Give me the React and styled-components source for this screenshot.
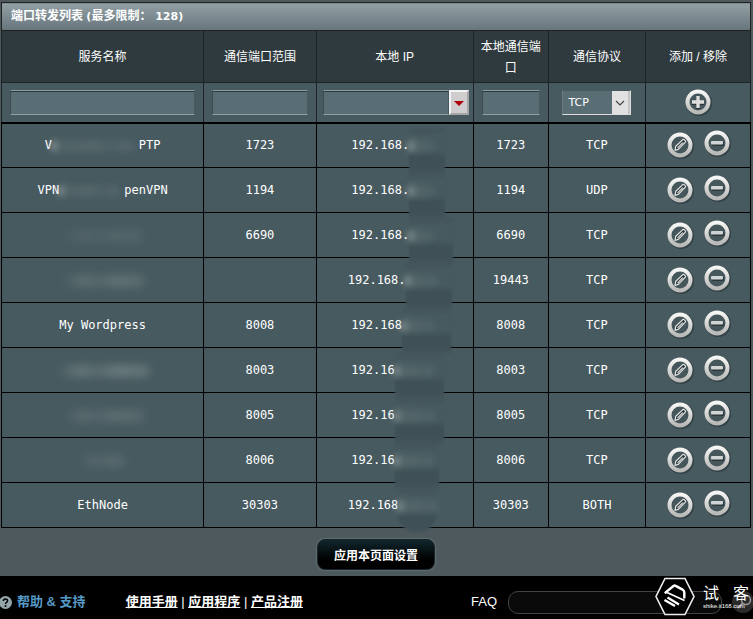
import React, { useState } from "react";
import styled, { createGlobalStyle } from "styled-components";

const GlobalStyle = createGlobalStyle`
  * {
    box-sizing: border-box;
  }
  body {
    margin: 0;
    background-color: #4d595d;
    color: #fff;
    font-family: "Liberation Sans", "Noto Sans CJK SC", sans-serif;
    font-size: 12px;
  }
`;

const Page = styled.div`
  min-height: 100vh;
  display: flex;
  flex-direction: column;
  overflow: hidden;
  position: relative;
`;
const Main = styled.main`
  padding: 2px 2px 6px 1px;
`;
const Table = styled.table`
  width: 100%;
  table-layout: fixed;
  border-collapse: collapse;
  background-color: #475a5f;
`;
const Col = styled.col`
  width: ${(props) => props.$width};
`;
const Title = styled.th`
  height: 28px;
  padding: 0 9px;
  border: 1px solid #222;
  background: linear-gradient(#92a0a5, #66757c);
  text-align: left;
  line-height: 18px;
`;
const Limit = styled.span`
  font-family: "DejaVu Sans", "Noto Sans CJK SC", sans-serif;
  font-size: 11px;
`;
const HeadCell = styled.th`
  height: 52px;
  padding: 2px 5px 0;
  border: 1px solid #1c2427;
  background-color: #2f3a3e;
  font-weight: 400;
  line-height: 21px;
`;
const FormCell = styled.td`
  height: 40px;
  padding: 0 8px;
  border: 1px solid #1c2427;
  text-align: center;
`;
const Cell = styled.td`
  height: 45px;
  padding: 0;
  border: 1px solid #000;
  font-family: "DejaVu Sans Mono", monospace;
  line-height: 16px;
  text-align: center;
`;
const Body = styled.tbody`
  border-top: 2px solid #000;
`;

const Input = styled.input`
  display: block;
  width: 100%;
  min-width: 0;
  height: 25px;
  padding: 0 5px;
  border: 1px solid;
  border-color: #8f9ca0 #475a5f #929ea1 #3c4a4f;
  background-color: #596d74;
  box-shadow: inset 0 1px 0 #2b373b;
  color: #fff;
  font-size: 12px;
`;
const Combo = styled.div`
  display: flex;
  margin: 0 -4px 0 -2px;
`;
const ComboButton = styled.button`
  flex: none;
  width: 20px;
  height: 25px;
  padding: 0;
  border: 2px solid;
  border-color: #f4f4f4 #a5a5a5 #a5a5a5 #f4f4f4;
  background-color: #cfcdcd;
`;
const SelectBox = styled.div`
  display: inline-block;
  position: relative;
  vertical-align: middle;
`;
const Select = styled.select`
  appearance: none;
  display: block;
  width: 69px;
  height: 25px;
  padding: 0 20px 0 5px;
  border: 1px solid;
  border-color: #475a5f #dcdcdc #dcdcdc #6c7c81;
  border-radius: 0;
  background-color: #596d74;
  color: #fff;
  font-family: "DejaVu Sans", sans-serif;
  font-size: 11px;
`;
const Chevron = styled.span`
  position: absolute;
  top: 1px;
  right: 1px;
  width: 18px;
  height: 23px;
  background-color: #e1e1e1;
  border-right: 2px solid #c4c4c4;
  pointer-events: none;
`;

const Actions = styled.div`
  display: flex;
  justify-content: center;
  gap: 9px;
`;
const IconButton = styled.button`
  width: 28px;
  height: 30px;
  padding: 0;
  border: 0;
  background: none;
  cursor: pointer;

  svg {
    display: block;
  }
`;

/* private part of a name or address, smeared out */
const Hidden = styled.span`
  display: inline-block;
  position: relative;
  width: ${(props) => props.$chars}ch;
  height: 12px;
  vertical-align: middle;

  &::after {
    content: "";
    position: absolute;
    inset: 0 4px 0 -2px;
    border-radius: 6px;
    background: linear-gradient(
      90deg,
      #d5dddd88 0,
      #8c999c22 10px,
      #8c999c33 50%,
      #7b8a8e22 70%,
      #8c999c33
    );
    filter: blur(3px);
  }
`;
const HiddenIp = styled(Hidden)`
  &::before {
    content: "";
    position: absolute;
    top: -12px;
    left: 0;
    width: ${(props) => props.$width}px;
    height: 45px;
    background: linear-gradient(#43555b 0, #475a5f 8px, #475a5f 22px, #3f5056 30px, #3f5056 38px, #43555b);
    filter: blur(1px);
    border-radius: ${(props) => (props.$last ? "0 0 20px 20px" : 0)};
  }
`;
const Blur = styled.span`
  display: inline-block;
  width: ${(props) => props.$width}px;
  height: 12px;
  vertical-align: middle;
  background: linear-gradient(90deg, #9aa6a800, #9aa6a877 25%, #9aa6a844 45%, #9aa6a888 65%, #9aa6a866);
  filter: blur(4px);
  opacity: ${(props) => props.$strength};
`;

const ApplyButton = styled.button`
  display: block;
  margin: 11px auto 0;
  height: 31px;
  padding: 0 16px;
  border: 1px solid #16262b;
  border-radius: 8px;
  background: linear-gradient(#10262d, #000 70%);
  box-shadow: 0 0 2px #8a979b;
  color: #fff;
  font-family: inherit;
  font-size: 12px;
  font-weight: 700;
`;

const Footer = styled.footer`
  flex: 1;
  min-height: 43px;
  padding-top: 9px;
  background-color: #000;
  font-size: 13px;
  line-height: 20px;
`;
const FooterRow = styled.div`
  display: flex;
  align-items: center;
  height: 34px;
`;
const Help = styled.div`
  display: flex;
  align-items: center;
  gap: 5px;
  margin-left: -1px;
  margin-right: 40px;
  color: #569ac7;
  font-weight: 700;
`;
const Links = styled.nav`
  flex: 1;
`;
const FooterLink = styled.a`
  color: #fff;
  font-weight: 700;
`;
const SearchBox = styled.input`
  width: 214px;
  height: 23px;
  margin: 0 10px 0 11px;
  padding: 0 10px;
  border: 1px solid #444;
  border-radius: 10px;
  background-color: #0a0a0a;
  color: #fff;
`;
const SearchButton = styled.button`
  width: 21px;
  height: 24px;
  padding: 0;
  border: 0;
  background: none;
`;
const Watermark = styled.div`
  position: absolute;
  right: 4px;
  bottom: 3px;
  display: flex;
  align-items: center;
  gap: 8px;
  pointer-events: none;
`;
const Brand = styled.div`
  width: 46px;
`;
const BrandName = styled.div`
  display: flex;
  justify-content: space-between;
  font-size: 16px;
  line-height: 18px;
`;
const BrandUrl = styled.div`
  font-size: 6px;
  line-height: 6px;
`;

const Ring = ({ cy }) => (
  <>
    <defs>
      <linearGradient id="ring" x1="0" y1="0" x2="0" y2="1">
        <stop offset="0" stopColor="#f6f6f4" />
        <stop offset="1" stopColor="#b9bab8" />
      </linearGradient>
    </defs>
    <circle cx="15" cy={cy + 1} r="11" fill="none" stroke="#263237" strokeWidth="4" opacity=".6" />
    <circle cx="14" cy={cy} r="10.5" fill="#46575c" stroke="url(#ring)" strokeWidth="4" />
  </>
);

const AddIcon = () => (
  <svg width="28" height="30" viewBox="0 0 28 30">
    <Ring cy={15} />
    <path d="M14 10v12M8 16h12" stroke="#263237" strokeWidth="4" />
    <path d="M14 9v12M8 15h12" stroke="#dededc" strokeWidth="3.4" />
  </svg>
);

const EditIcon = () => (
  <svg width="28" height="30" viewBox="0 0 28 30">
    <Ring cy={15} />
    <path
      d="M9 20.500l.8-4.300 7-6.600q.7-.5 1.300 0l1.200 1.300q.5.6 0 1.200l-6.700 7z"
      fill="#2c383d"
      stroke="#e4e5e3"
      strokeWidth="1.2"
      strokeLinejoin="round"
    />
    <path d="M11.600 17.800l5.200-5.200" stroke="#e4e5e3" strokeWidth="1.200" />
  </svg>
);

const RemoveIcon = () => (
  <svg width="28" height="30" viewBox="0 0 28 30">
    <Ring cy={13} />
    <rect x="9" y="12" width="12" height="4" rx="1" fill="#2c383d" />
    <rect x="8" y="11" width="12" height="3.500" rx="1" fill="#d0d4d4" />
  </svg>
);

const HexLogo = () => (
  <svg width="40" height="39" viewBox="0 0 40 39">
    <path d="M10 1.500h20L39 19.500 30 37.500H10L1 19.500z" fill="#000" stroke="#eee" strokeWidth="1.6" />
    <path
      d="M10 16.500l1-1.500 7.500-6q1-.8 2.200-.1l7.300 4q1.300.8 1.300 2.300v6.300"
      fill="none"
      stroke="#fff"
      strokeWidth="2.400"
    />
    <path d="M12 15.500l17.500 8" stroke="#fff" strokeWidth="1.800" />
    <path d="M12.500 20.500l11.500 7M9.500 23l10.500 6" stroke="#fff" strokeWidth="2.200" />
  </svg>
);

const columns = [
  { title: "服务名称", width: "27%" },
  { title: "通信端口范围", width: "15%" },
  { title: "本地 IP", width: "21%" },
  { title: "本地通信端口", width: "10%" },
  { title: "通信协议", width: "13%" },
  { title: "添加 / 移除", width: "14%" },
];

const rules = [
  { name: <>V<Hidden $chars={12} />PTP</>, range: "1723", ip: "192.168.", hidden: 4, smear: 36, port: "1723", protocol: "TCP" },
  { name: <>VPN<Hidden $chars={9} />penVPN</>, range: "1194", ip: "192.168.", hidden: 4, smear: 36, port: "1194", protocol: "UDP" },
  { name: <Blur $width={80} $strength={0.3} />, range: "6690", ip: "192.168.", hidden: 4, smear: 44, port: "6690", protocol: "TCP" },
  { name: <Blur $width={82} $strength={0.6} />, range: "", ip: "192.168.", hidden: 5, smear: 46, port: "19443", protocol: "TCP" },
  { name: "My Wordpress", range: "8008", ip: "192.168", hidden: 5, smear: 49, port: "8008", protocol: "TCP" },
  { name: <Blur $width={92} $strength={0.8} />, range: "8003", ip: "192.16", hidden: 6, smear: 49, port: "8003", protocol: "TCP" },
  { name: <Blur $width={82} $strength={0.5} />, range: "8005", ip: "192.16", hidden: 6, smear: 49, port: "8005", protocol: "TCP" },
  { name: <Blur $width={44} $strength={0.4} />, range: "8006", ip: "192.16", hidden: 6, smear: 44, port: "8006", protocol: "TCP" },
  { name: "EthNode", range: "30303", ip: "192.168", hidden: 6, smear: 38, port: "30303", protocol: "BOTH" },
];

const App = () => {
  const [protocol, setProtocol] = useState("TCP");

  return (
    <Page>
      <GlobalStyle />
      <Main>
        <Table>
          <colgroup>
            {columns.map((column) => (
              <Col key={column.title} $width={column.width} />
            ))}
          </colgroup>
          <thead>
            <tr>
              <Title colSpan={6}>
                端口转发列表 <Limit>(</Limit>最多限制：<Limit> 128)</Limit>
              </Title>
            </tr>
            <tr>
              {columns.map((column) => (
                <HeadCell key={column.title}>{column.title}</HeadCell>
              ))}
            </tr>
            <tr>
              <FormCell>
                <Input aria-label="服务名称" />
              </FormCell>
              <FormCell>
                <Input aria-label="通信端口范围" />
              </FormCell>
              <FormCell>
                <Combo>
                  <Input aria-label="本地 IP" />
                  <ComboButton aria-label="本地 IP">
                    <svg width="12" height="8" viewBox="0 0 12 8">
                      <path d="M1 2h10L6 7z" fill="#b0000a" />
                    </svg>
                  </ComboButton>
                </Combo>
              </FormCell>
              <FormCell>
                <Input aria-label="本地通信端口" />
              </FormCell>
              <FormCell>
                <SelectBox>
                  <Select
                    aria-label="通信协议"
                    value={protocol}
                    onChange={(e) => setProtocol(e.target.value)}
                  >
                    <option>TCP</option>
                    <option>UDP</option>
                    <option>BOTH</option>
                  </Select>
                  <Chevron>
                    <svg width="16" height="23" viewBox="0 0 16 23">
                      <path d="M4 10l4 4 4-4" fill="none" stroke="#444" strokeWidth="1.2" />
                    </svg>
                  </Chevron>
                </SelectBox>
              </FormCell>
              <FormCell>
                <Actions>
                  <IconButton aria-label="添加">
                    <AddIcon />
                  </IconButton>
                </Actions>
              </FormCell>
            </tr>
          </thead>
          <Body>
            {rules.map((rule, index) => (
              <tr key={index}>
                <Cell>{rule.name}</Cell>
                <Cell>{rule.range}</Cell>
                <Cell>
                  {rule.ip}
                  <HiddenIp
                    $chars={rule.hidden}
                    $width={rule.smear}
                    $last={index === rules.length - 1}
                  />
                </Cell>
                <Cell>{rule.port}</Cell>
                <Cell>{rule.protocol}</Cell>
                <Cell>
                  <Actions>
                    <IconButton aria-label="编辑">
                      <EditIcon />
                    </IconButton>
                    <IconButton aria-label="移除">
                      <RemoveIcon />
                    </IconButton>
                  </Actions>
                </Cell>
              </tr>
            ))}
          </Body>
        </Table>
        <ApplyButton>应用本页面设置</ApplyButton>
      </Main>
      <Footer>
        <FooterRow>
          <Help>
            <svg width="13" height="13" viewBox="0 0 13 13">
              <circle cx="6.500" cy="6.500" r="6.500" fill="#93a7ab" />
              <path d="M4.400 5q0-2 2.100-2t2.100 1.800q0 1-1.100 1.600-.9.500-.9 1.500" fill="none" stroke="#000" strokeWidth="1.500" />
              <circle cx="6.500" cy="10" r="1" fill="#000" />
            </svg>
            帮助 & 支持
          </Help>
          <Links>
            <FooterLink href="#manual">使用手册</FooterLink> |{" "}
            <FooterLink href="#utility">应用程序</FooterLink> |{" "}
            <FooterLink href="#register">产品注册</FooterLink>
          </Links>
          <label htmlFor="faq">FAQ</label>
          <SearchBox id="faq" />
          <SearchButton aria-label="FAQ">
            <svg width="21" height="24" viewBox="0 0 21 24">
              <circle cx="11" cy="12" r="11" fill="#2b2b2b" />
              <circle cx="14" cy="10" r="4.500" fill="none" stroke="#999" strokeWidth="1.500" />
              <path d="M11 13l-5 5" stroke="#999" strokeWidth="2" />
            </svg>
          </SearchButton>
        </FooterRow>
      </Footer>
      <Watermark>
        <HexLogo />
        <Brand>
          <BrandName>
            <span>试</span>
            <span>客</span>
          </BrandName>
          <BrandUrl>shike.it168.com</BrandUrl>
        </Brand>
      </Watermark>
    </Page>
  );
};

export default App;
